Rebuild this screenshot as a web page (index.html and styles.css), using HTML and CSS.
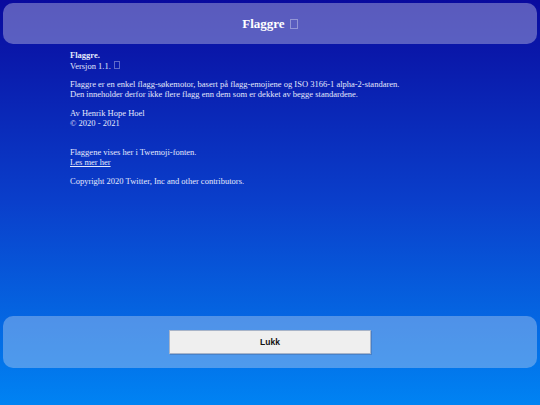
FILE: index.html
```html
<!DOCTYPE html>
<html lang="no">
<head>
<meta charset="utf-8">
<title>Flaggre</title>
<link rel="stylesheet" href="styles.css">
</head>
<body>
<div class="page">
  <header class="topbar">
    <h1 class="title">Flaggre <span class="tofu"></span></h1>
  </header>
  <main class="content">
    <p class="block"><strong>Flaggre.</strong><br>Versjon 1.1. <span class="tofu small"></span></p>
    <p class="block">Flaggre er en enkel flagg-søkemotor, basert på flagg-emojiene og ISO 3166-1 alpha-2-standaren.<br>Den inneholder derfor ikke flere flagg enn dem som er dekket av begge standardene.</p>
    <p class="block">Av Henrik Hope Hoel<br>© 2020 - 2021</p>
    <p class="block spaced">Flaggene vises her i Twemoji-fonten.<br><a class="link" href="#">Les mer her</a></p>
    <p class="block">Copyright 2020 Twitter, Inc and other contributors.</p>
  </main>
  <footer class="bottombar">
    <button class="close" type="button">Lukk</button>
  </footer>
</div>
</body>
</html>
```
FILE: styles.css
```css
html, body {
  margin: 0;
  padding: 0;
  height: 100%;
}
body {
  background: linear-gradient(180deg, #0a0a9e 0%, #0a3fcb 50%, #0083f3 100%);
  font-family: "Liberation Serif", "Times New Roman", serif;
  color: #e4e9fc;
}
.page {
  height: 405px;
  display: flex;
  flex-direction: column;
  padding: 3px;
  box-sizing: border-box;
}
.topbar {
  height: 41px;
  border-radius: 10px;
  background: rgba(170, 170, 220, 0.5);
  display: flex;
  align-items: center;
  justify-content: center;
}
.title {
  margin: 0;
  font-size: 13px;
  font-weight: bold;
  color: #ffffff;
}
.tofu {
  display: inline-block;
  width: 6px;
  height: 8px;
  border: 1px solid rgba(255, 255, 255, 0.35);
  vertical-align: -1px;
  margin-left: 2px;
}
.tofu.small {
  width: 4px;
  height: 6px;
  vertical-align: 0;
  margin-left: 1px;
}
.content {
  flex: 1;
  padding: 7px 0 0 67px;
  font-size: 8.5px;
  line-height: 9.7px;
}
.block {
  margin: 0 0 9px 0;
}
.block.spaced {
  margin-top: 20px;
}
.link {
  color: #e4e9fc;
  text-decoration: underline;
}
.bottombar {
  height: 52px;
  margin-bottom: 34px;
  border-radius: 10px;
  background: rgba(170, 200, 240, 0.45);
  display: flex;
  align-items: center;
  justify-content: center;
}
.close {
  width: 202px;
  height: 24px;
  background: #efefef;
  border: 1px solid #a8b4c8;
  border-radius: 0;
  box-shadow: 1px 1px 0 rgba(60, 90, 140, 0.35);
  font-family: "Liberation Sans", Arial, sans-serif;
  font-weight: bold;
  font-size: 8.5px;
  color: #111;
}
```
